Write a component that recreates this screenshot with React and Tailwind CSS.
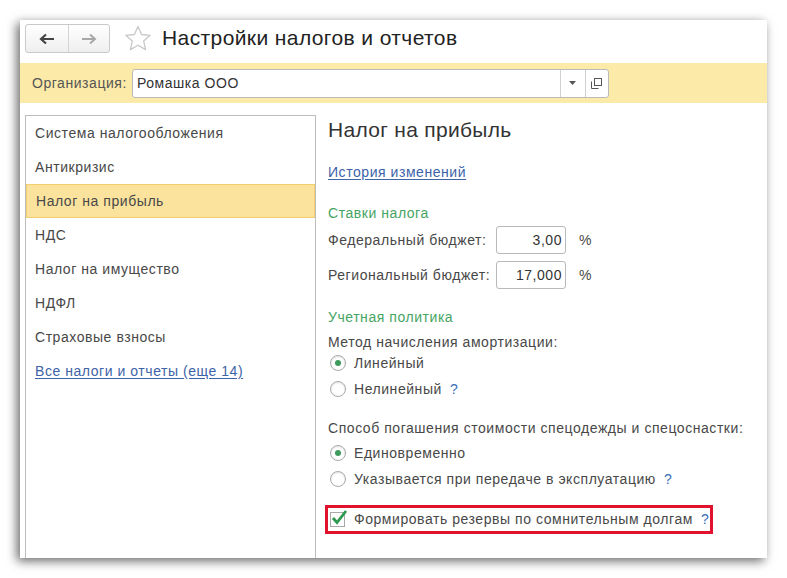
import React from "react";

const font = { fontFamily: '"Liberation Sans", Arial, sans-serif' };

const menu = [
  "Система налогообложения",
  "Антикризис",
  "Налог на прибыль",
  "НДС",
  "Налог на имущество",
  "НДФЛ",
  "Страховые взносы",
];

const Radio = ({ checked }) => (
  <span className="w-[16px] h-[16px] rounded-full border border-[#a9a9a9] bg-white shadow-[inset_0_1px_2px_rgba(0,0,0,0.12)] flex items-center justify-center shrink-0">
    {checked && <span className="w-[6px] h-[6px] rounded-full bg-[#3d9b5c]" />}
  </span>
);

const Q = () => <span className="text-[#3a6fb5]">?</span>;

const Star = () => (
  <svg width="28" height="26" viewBox="0 0 28 26">
    <path
      d="M14 1.5l3.6 8 8.6.8-6.5 5.8 1.9 8.5L14 20.2l-7.6 4.4 1.9-8.5L1.8 10.3l8.6-.8z"
      fill="none"
      stroke="#c8c8c8"
      strokeWidth="1.3"
      strokeLinejoin="round"
    />
  </svg>
);

export default function App() {
  return (
    <div className="w-full h-[578px] bg-white pt-[20px] pl-[20px]" style={font}>
      <div className="w-[747px] h-[538px] bg-white shadow-[-3px_3px_10px_rgba(0,0,0,0.6)] flex flex-col text-[14px] tracking-[0.55px] text-[#484848]">
        {/* header */}
        <div className="h-[43px] flex items-start pl-[5px] pt-[4px]">
          <div className="flex h-[29px] w-[85px] border border-[#c9c9c9] rounded-[3px] bg-gradient-to-b from-white to-[#efefef]">
            <div className="w-[43px] flex items-center justify-center border-r border-[#d4d4d4]">
              <svg width="16" height="12" viewBox="0 0 16 12">
                <path d="M15 6H3M7 1.5L2 6l5 4.5" fill="none" stroke="#444" strokeWidth="2.2" />
              </svg>
            </div>
            <div className="flex-1 flex items-center justify-center">
              <svg width="16" height="12" viewBox="0 0 16 12">
                <path d="M1 6h12M9 1.5L14 6l-5 4.5" fill="none" stroke="#a8a8a8" strokeWidth="2" />
              </svg>
            </div>
          </div>
          <div className="ml-[14px] mt-[1px]">
            <Star />
          </div>
          <div className="ml-[10px] text-[21px] tracking-[0.4px] leading-[28px] text-[#222]">Настройки налогов и отчетов</div>
        </div>

        {/* org bar */}
        <div className="h-[40px] bg-[#fbeaa8] flex items-center pl-[12px]">
          <span className="text-[#555] mr-[5px]">Организация:</span>
          <div className="flex h-[29px] w-[477px] border border-[#b9b9b9] rounded-[3px] bg-white">
            <div className="flex-1 flex items-center pl-[4px] text-[#333]">Ромашка ООО</div>
            <div className="w-[25px] border-l border-[#d0d0d0] flex items-center justify-center">
              <svg width="7" height="4" viewBox="0 0 7 4"><path d="M0 0h7L3.5 4z" fill="#555" /></svg>
            </div>
            <div className="w-[23px] border-l border-[#d0d0d0] flex items-center justify-center">
              <svg width="11" height="11" viewBox="0 0 11 11">
                <rect x="3.5" y="0.5" width="7" height="7" fill="none" stroke="#555" />
                <path d="M0.5 3.5v7h7" fill="none" stroke="#555" />
              </svg>
            </div>
          </div>
        </div>

        {/* body */}
        <div className="flex flex-1 pt-[12px]">
          <div className="ml-[5px] w-[291px] border border-b-0 border-[#bdbdbd] flex flex-col">
            {menu.map((m, i) => (
              <div
                key={m}
                className={`h-[34px] flex items-center pl-[9px] ${
                  i === 2 ? "bg-[#fbe39e] border border-[#f2cf6a] pl-[8px]" : ""
                }`}
              >
                {m}
              </div>
            ))}
            <div className="h-[34px] flex items-center pl-[9px]">
              <span className="text-[#3d63a8] underline underline-offset-2">Все налоги и отчеты (еще 14)</span>
            </div>
          </div>

          <div className="flex-1 pl-[12px] flex flex-col">
            <div className="pt-[3px] h-[27px] text-[21px] tracking-[0.3px] leading-[24px] text-[#333]">Налог на прибыль</div>
            <div className="mt-[20px] h-[20px] leading-[20px]">
              <span className="text-[#3d63a8] underline underline-offset-2">История изменений</span>
            </div>
            <div className="mt-[21px] h-[20px] leading-[20px] text-[#46a463]">Ставки налога</div>
            <div className="mt-[3px] h-[28px] flex items-center">
              <span className="w-[168px]">Федеральный бюджет:</span>
              <div className="w-[70px] h-[28px] border border-[#b9b9b9] rounded-[3px] flex items-center justify-end pr-[3px] text-[#333]">3,00</div>
              <span className="ml-[13px]">%</span>
            </div>
            <div className="mt-[7px] h-[28px] flex items-center">
              <span className="w-[168px]">Региональный бюджет:</span>
              <div className="w-[70px] h-[28px] border border-[#b9b9b9] rounded-[3px] flex items-center justify-end pr-[3px] text-[#333]">17,000</div>
              <span className="ml-[13px]">%</span>
            </div>
            <div className="mt-[18px] h-[20px] leading-[20px] text-[#46a463]">Учетная политика</div>
            <div className="mt-[5px] h-[20px] leading-[20px]">Метод начисления амортизации:</div>
            <div className="mt-[1px] h-[20px] flex items-center gap-[8px] pl-[2px]">
              <Radio checked />
              <span>Линейный</span>
            </div>
            <div className="mt-[6px] h-[20px] flex items-center gap-[8px] pl-[2px]">
              <Radio />
              <span>Нелинейный</span>
              <Q />
            </div>
            <div className="mt-[19px] h-[20px] leading-[20px]">Способ погашения стоимости спецодежды и спецоснастки:</div>
            <div className="mt-[5px] h-[20px] flex items-center gap-[8px] pl-[2px]">
              <Radio checked />
              <span>Единовременно</span>
            </div>
            <div className="mt-[6px] h-[20px] flex items-center gap-[8px] pl-[2px]">
              <Radio />
              <span>Указывается при передаче в эксплуатацию</span>
              <Q />
            </div>
            <div className="mt-[16px] -ml-[3px] w-[388px] h-[29px] border-[3px] border-[#e0122e] flex items-center pl-[2px] gap-[8px] whitespace-nowrap">
              <span className="w-[15px] h-[15px] border border-[#a9a9a9] bg-white relative shrink-0">
                <svg className="absolute -top-[4px] left-[0px]" width="17" height="17" viewBox="0 0 17 17">
                  <path d="M2 9l4 4.5L15 2" fill="none" stroke="#2f9a4f" strokeWidth="2.8" />
                </svg>
              </span>
              <span className="ml-[1px] shrink-0">Формировать резервы по сомнительным долгам</span>
              <Q />
            </div>
          </div>
        </div>
      </div>
    </div>
  );
}
